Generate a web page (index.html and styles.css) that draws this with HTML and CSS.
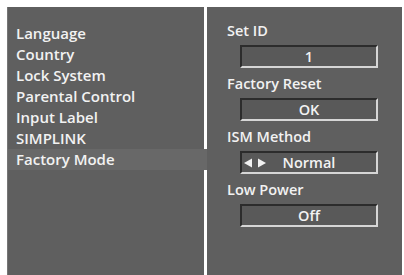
FILE: index.html
```html
<!DOCTYPE html>
<html>
<head>
    <meta charset="UTF-8">
    <title>Option - Factory Mode</title>
    <meta name="viewport" content="width=device-width, initial-scale=1">
    <link rel="stylesheet" href="styles.css">
</head>
<body>
<div class="screen">
    <div class="menu">
        <div class="item">Language</div>
        <div class="item">Country</div>
        <div class="item">Lock System</div>
        <div class="item">Parental Control</div>
        <div class="item">Input Label</div>
        <div class="item">SIMPLINK</div>
        <div class="item selected">Factory Mode</div>
    </div>
    <div class="panel">
        <div class="label">Set ID</div>
        <div class="field">1</div>
        <div class="label">Factory Reset</div>
        <div class="field">OK</div>
        <div class="label">ISM Method</div>
        <div class="field arrows">
            <svg class="arrow" width="24" height="10" viewBox="0 0 24 10">
                <polygon points="0,5 8,0.5 8,9.5" fill="#f2f2f2"/>
                <polygon points="22,5 14,0.5 14,9.5" fill="#f2f2f2"/>
            </svg>
            <span>Normal</span>
            <span></span>
        </div>
        <div class="label">Low Power</div>
        <div class="field">Off</div>
    </div>
</div>
</body>
</html>
```

FILE: styles.css
```css
body {
    margin: 0;
    background-color: #fff;
    font-family: "Open Sans", "Liberation Sans", sans-serif;
    font-weight: 600;
    font-size: 14.5px;
    color: #f2f2f2;
}

.screen {
    display: flex;
    gap: 3px;
    height: 275px;
    padding: 7px 2px 0 7px;
    box-sizing: border-box;
    overflow: hidden;
}

.menu {
    width: 197px;
    background-color: #5f5f5f;
    border-left: 1px solid #767676;
    box-sizing: border-box;
    padding-top: 16px;
    font-size: 15px;
}

.item {
    height: 21px;
    line-height: 21px;
    padding-left: 8px;
}

.item.selected {
    background-color: #686868;
    margin-right: -3px;
}

.panel {
    flex: 1;
    background-color: #5f5f5f;
    padding-top: 15px;
}

.label {
    height: 18px;
    line-height: 18px;
    padding-left: 20px;
    margin-bottom: 5px;
}

.field {
    width: 138px;
    height: 23px;
    margin: 0 0 7px 33px;
    box-sizing: border-box;
    background-color: #595959;
    border-top: 2px solid #2c2c2c;
    border-left: 2px solid #2c2c2c;
    border-bottom: 2px solid #d6d6d6;
    border-right: 2px solid #d6d6d6;
    line-height: 19px;
    text-align: center;
}

.arrows {
    display: grid;
    grid-template-columns: 34px 1fr 34px;
    align-items: center;
}

.arrow {
    display: block;
    margin-left: 2px;
}
```
